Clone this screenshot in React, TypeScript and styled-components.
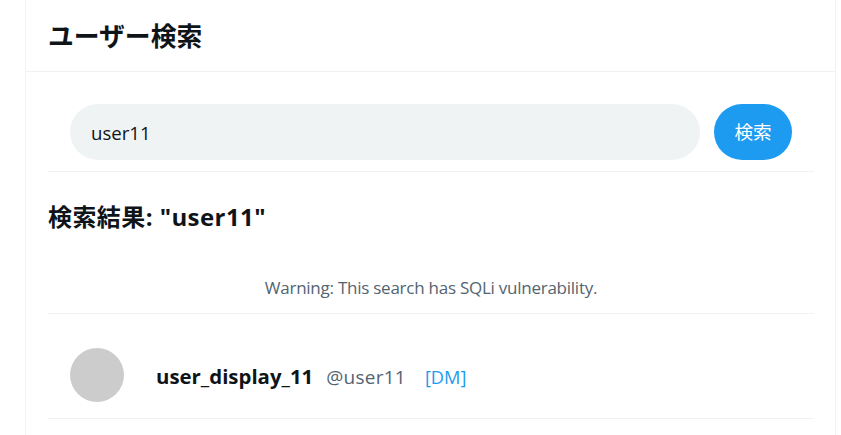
import React from "react";
import styled, { createGlobalStyle } from "styled-components";

const Global = createGlobalStyle`
  html, body { margin: 0; padding: 0; background: #fff; }
  body { font-family: "Open Sans", "Noto Sans CJK JP", sans-serif; color: #0f1419; overflow: hidden; }
  * { box-sizing: border-box; }
`;
const Main = styled.main`
  width: 811px; height: 435px; margin-left: 25px;
  border-left: 1px solid #eff3f4; border-right: 1px solid #eff3f4;
`;
const Header = styled.header`
  height: 72px; padding: 0 22px 2px; display: flex; align-items: center;
  border-bottom: 1px solid #eff3f4;
`;
const Title = styled.h1`
  margin: 0; font-size: 25.8px; line-height: 1; font-weight: 700; color: #0f1419;
  font-family: "Noto Sans CJK JP", sans-serif;
`;
const Content = styled.div`
  padding: 0 21px 0 22px;
`;
const SearchForm = styled.form`
  height: 100px; padding: 32px 22px 11px; display: flex; gap: 14px;
  border-bottom: 1px solid #eff3f4;
`;
const SearchInput = styled.input`
  width: 630px; height: 56px; border: 0; outline: 0; border-radius: 28px;
  padding: 0 21px; background: #eff3f4; font: 400 18.6px "Open Sans", sans-serif; color: #0f1419;
`;
const SearchButton = styled.button`
  width: 78px; height: 56px; border: 0; border-radius: 28px; background: #1d9bf0; color: #fff;
  font: 400 18.6px "Noto Sans CJK JP", sans-serif; padding: 0 0 3px;
`;
const ResultTitle = styled.h2`
  margin: 0; height: 92px; padding-top: 29px; font-size: 24px; line-height: 32px; font-weight: 700; color: #0f1419;
  letter-spacing: 0.43px; font-family: "Open Sans", "Noto Sans CJK JP", sans-serif;
`;
const Warning = styled.p`
  margin: 0; height: 50px; padding-top: 12px; text-align: center; font-size: 17px; line-height: 24px;
  letter-spacing: -0.25px; color: #536471; border-bottom: 1px solid #eff3f4;
`;
const UserRow = styled.div`
  height: 105px; padding: 34px 22px 0; display: flex; border-bottom: 1px solid #eff3f4;
`;
const Avatar = styled.div`
  width: 54px; height: 54px; border-radius: 50%; background: #ccc; margin-right: 32px; flex: none;
`;
const UserText = styled.div`
  display: flex; align-items: baseline; height: 54px; padding-top: 12px; line-height: 32px;
`;
const DisplayName = styled.strong`
  font-size: 20.4px; font-weight: 700; color: #0f1419; margin-right: 13px;
`;
const Handle = styled.span`
  font-size: 19px; letter-spacing: 0.25px; color: #536471; margin-right: 19px;
`;
const DmLink = styled.a`
  font-size: 18.2px; color: #1d9bf0; text-decoration: none;
`;

export default function App() {
  return (
    <>
      <Global />
      <Main>
        <Header><Title>ユーザー検索</Title></Header>
        <Content>
          <SearchForm onSubmit={(e) => e.preventDefault()}>
            <SearchInput defaultValue="user11" />
            <SearchButton>検索</SearchButton>
          </SearchForm>
          <ResultTitle>検索結果: "user11"</ResultTitle>
          <Warning>Warning: This search has SQLi vulnerability.</Warning>
          <UserRow>
            <Avatar />
            <UserText>
              <DisplayName>user_display_11</DisplayName>
              <Handle>@user11</Handle>
              <DmLink href="#">[DM]</DmLink>
            </UserText>
          </UserRow>
        </Content>
      </Main>
    </>
  );
}
